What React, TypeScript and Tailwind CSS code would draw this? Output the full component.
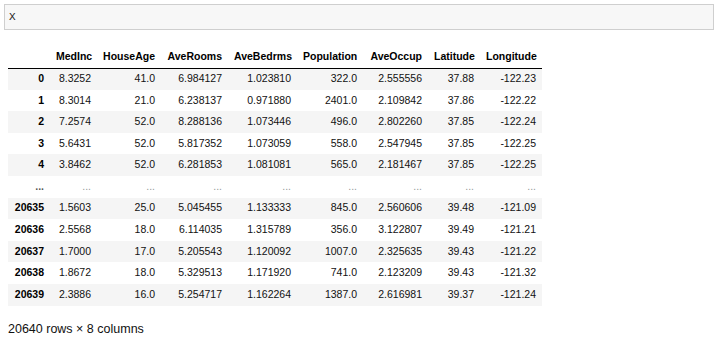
import React from "react";

const cols = ["MedInc", "HouseAge", "AveRooms", "AveBedrms", "Population", "AveOccup", "Latitude", "Longitude"];
const widths = ["w-[47px]", "w-[64px]", "w-[67px]", "w-[69px]", "w-[66px]", "w-[65px]", "w-[52px]", "w-[62px]"];

const rows: string[][] = [
  ["0", "8.3252", "41.0", "6.984127", "1.023810", "322.0", "2.555556", "37.88", "-122.23"],
  ["1", "8.3014", "21.0", "6.238137", "0.971880", "2401.0", "2.109842", "37.86", "-122.22"],
  ["2", "7.2574", "52.0", "8.288136", "1.073446", "496.0", "2.802260", "37.85", "-122.24"],
  ["3", "5.6431", "52.0", "5.817352", "1.073059", "558.0", "2.547945", "37.85", "-122.25"],
  ["4", "3.8462", "52.0", "6.281853", "1.081081", "565.0", "2.181467", "37.85", "-122.25"],
  ["...", "...", "...", "...", "...", "...", "...", "...", "..."],
  ["20635", "1.5603", "25.0", "5.045455", "1.133333", "845.0", "2.560606", "39.48", "-121.09"],
  ["20636", "2.5568", "18.0", "6.114035", "1.315789", "356.0", "3.122807", "39.49", "-121.21"],
  ["20637", "1.7000", "17.0", "5.205543", "1.120092", "1007.0", "2.325635", "39.43", "-121.22"],
  ["20638", "1.8672", "18.0", "5.329513", "1.171920", "741.0", "2.123209", "39.43", "-121.32"],
  ["20639", "2.3886", "16.0", "5.254717", "1.162264", "1387.0", "2.616981", "39.37", "-121.24"],
];

export default function App() {
  return (
    <div className="w-[719px] h-[341px] bg-white overflow-hidden pt-[4px] px-[4px]" style={{ fontFamily: '"Liberation Sans", Arial, sans-serif' }}>
      <div className="w-[710px] h-[26px] border border-[#cfcfcf] bg-[#f7f7f7] flex items-center pl-[4px]">
        <span className="text-[11px] text-[#222]" style={{ fontFamily: '"Liberation Mono", "DejaVu Sans Mono", monospace' }}>X</span>
      </div>
      <div className="pl-[4px] pt-[17px]">
        <table className="table-fixed w-[534px] border-collapse text-[10.5px] text-black">
          <thead>
            <tr className="h-[21px] border-b border-black">
              <th className="w-[42px] p-0"></th>
              {cols.map((c, i) => (
                <th key={c} className={`${widths[i]} text-right font-bold px-[6px] py-0 whitespace-nowrap`}>{c}</th>
              ))}
            </tr>
          </thead>
          <tbody>
            {rows.map((r, ri) => {
              const ell = r[0] === "...";
              return (
                <tr key={ri} className={ri % 2 === 0 ? "bg-[#f5f5f5]" : "bg-white"}>
                  <th className={`h-[21.6px] p-0 pr-[6px] text-right font-bold whitespace-nowrap ${ell ? "text-[#555]" : ""}`}>{r[0]}</th>
                  {r.slice(1).map((v, ci) => (
                    <td key={ci} className={`h-[21.6px] py-0 px-[6px] text-right whitespace-nowrap ${ell ? "text-[#999]" : "text-[#111]"}`}>{v}</td>
                  ))}
                </tr>
              );
            })}
          </tbody>
        </table>
        <div className="mt-[16px] text-[12.5px] text-[#111] leading-[15px]">20640 rows × 8 columns</div>
      </div>
    </div>
  );
}
